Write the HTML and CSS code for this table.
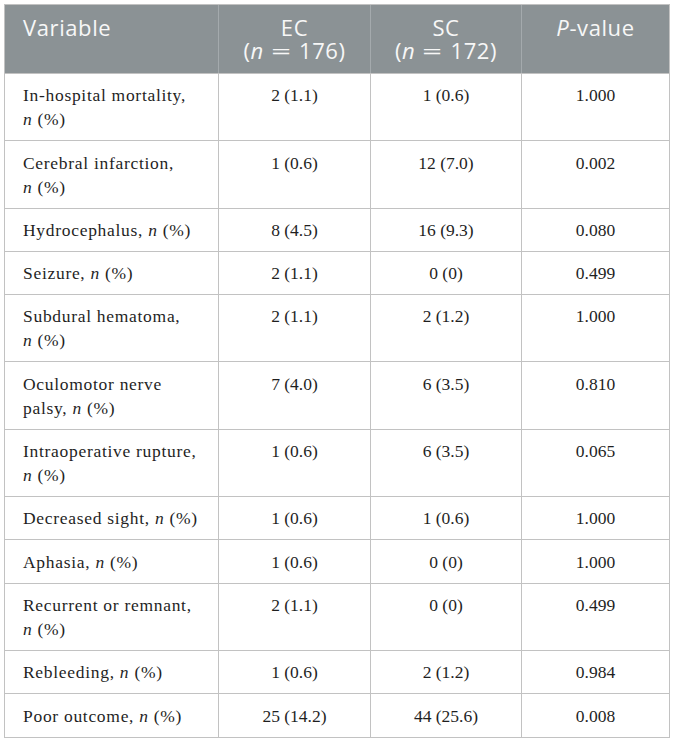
FILE: index.html
```html
<!DOCTYPE html>
<html lang="en">
<head>
<meta charset="utf-8">
<title>Complications</title>
<link rel="stylesheet" href="styles.css">
</head>
<body>
<table class="data">
  <colgroup>
    <col class="c-var">
    <col class="c-ec">
    <col class="c-sc">
    <col class="c-p">
  </colgroup>
  <thead>
    <tr>
      <th class="left">Variable</th>
      <th><span class="hl">EC</span><span class="hl">(<i>n</i><span class="eq">=</span>176)</span></th>
      <th><span class="hl">SC</span><span class="hl">(<i>n</i><span class="eq">=</span>172)</span></th>
      <th><span class="hl"><i>P</i>-value</span></th>
    </tr>
  </thead>
  <tbody>
    <tr><td class="left">In-hospital mortality,<br><i>n</i> (%)</td><td>2 (1.1)</td><td>1 (0.6)</td><td>1.000</td></tr>
    <tr><td class="left">Cerebral infarction,<br><i>n</i> (%)</td><td>1 (0.6)</td><td>12 (7.0)</td><td>0.002</td></tr>
    <tr><td class="left">Hydrocephalus, <i>n</i> (%)</td><td>8 (4.5)</td><td>16 (9.3)</td><td>0.080</td></tr>
    <tr><td class="left">Seizure, <i>n</i> (%)</td><td>2 (1.1)</td><td>0 (0)</td><td>0.499</td></tr>
    <tr><td class="left">Subdural hematoma,<br><i>n</i> (%)</td><td>2 (1.1)</td><td>2 (1.2)</td><td>1.000</td></tr>
    <tr><td class="left">Oculomotor nerve<br>palsy, <i>n</i> (%)</td><td>7 (4.0)</td><td>6 (3.5)</td><td>0.810</td></tr>
    <tr><td class="left">Intraoperative rupture,<br><i>n</i> (%)</td><td>1 (0.6)</td><td>6 (3.5)</td><td>0.065</td></tr>
    <tr><td class="left">Decreased sight, <i>n</i> (%)</td><td>1 (0.6)</td><td>1 (0.6)</td><td>1.000</td></tr>
    <tr><td class="left">Aphasia, <i>n</i> (%)</td><td>1 (0.6)</td><td>0 (0)</td><td>1.000</td></tr>
    <tr><td class="left">Recurrent or remnant,<br><i>n</i> (%)</td><td>2 (1.1)</td><td>0 (0)</td><td>0.499</td></tr>
    <tr><td class="left">Rebleeding, <i>n</i> (%)</td><td>1 (0.6)</td><td>2 (1.2)</td><td>0.984</td></tr>
    <tr><td class="left">Poor outcome, <i>n</i> (%)</td><td>25 (14.2)</td><td>44 (25.6)</td><td>0.008</td></tr>
  </tbody>
</table>
</body>
</html>
```

FILE: styles.css
```css
html, body {
  margin: 0;
  padding: 0;
  background: #ffffff;
}

body {
  padding: 4px 0 0 4px;
}

.data {
  width: 665px;
  border-collapse: collapse;
  table-layout: fixed;
  border: 1px solid #c2c2c2;
}

.c-var { width: 214px; }
.c-ec { width: 152px; }
.c-sc { width: 151px; }
.c-p { width: 148px; }

.data th {
  background: #8b9295;
  color: #f7f7f7;
  font-family: "Open Sans", "Liberation Sans", sans-serif;
  font-weight: 400;
  font-size: 22px;
  letter-spacing: 0.6px;
  line-height: 23px;
  height: 46px;
  padding: 11px 8px 11px 8px;
  text-align: center;
  vertical-align: top;
  border-left: 1px solid #a4aaad;
  border-top: 1px solid #c2c2c2;
  border-bottom: 1px solid #c2c2c2;
}

.data th:first-child {
  border-left: 1px solid #c2c2c2;
}

.hl {
  display: block;
  height: 23px;
  white-space: nowrap;
}

.eq {
  display: inline-block;
  transform: scaleX(1.6);
  margin: 0 11px;
}

.data td {
  font-family: "Liberation Serif", "Times New Roman", serif;
  font-size: 17.5px;
  line-height: 24px;
  color: #1f1f1f;
  padding: 9.3px 12px 9px 12px;
  text-align: center;
  vertical-align: top;
  border: 1px solid #c2c2c2;
}

.data td.left {
  text-align: left;
  padding-left: 18px;
  letter-spacing: 0.7px;
}

.data th.left {
  text-align: left;
  padding-left: 18px;
}

.data i {
  font-style: italic;
}
```
